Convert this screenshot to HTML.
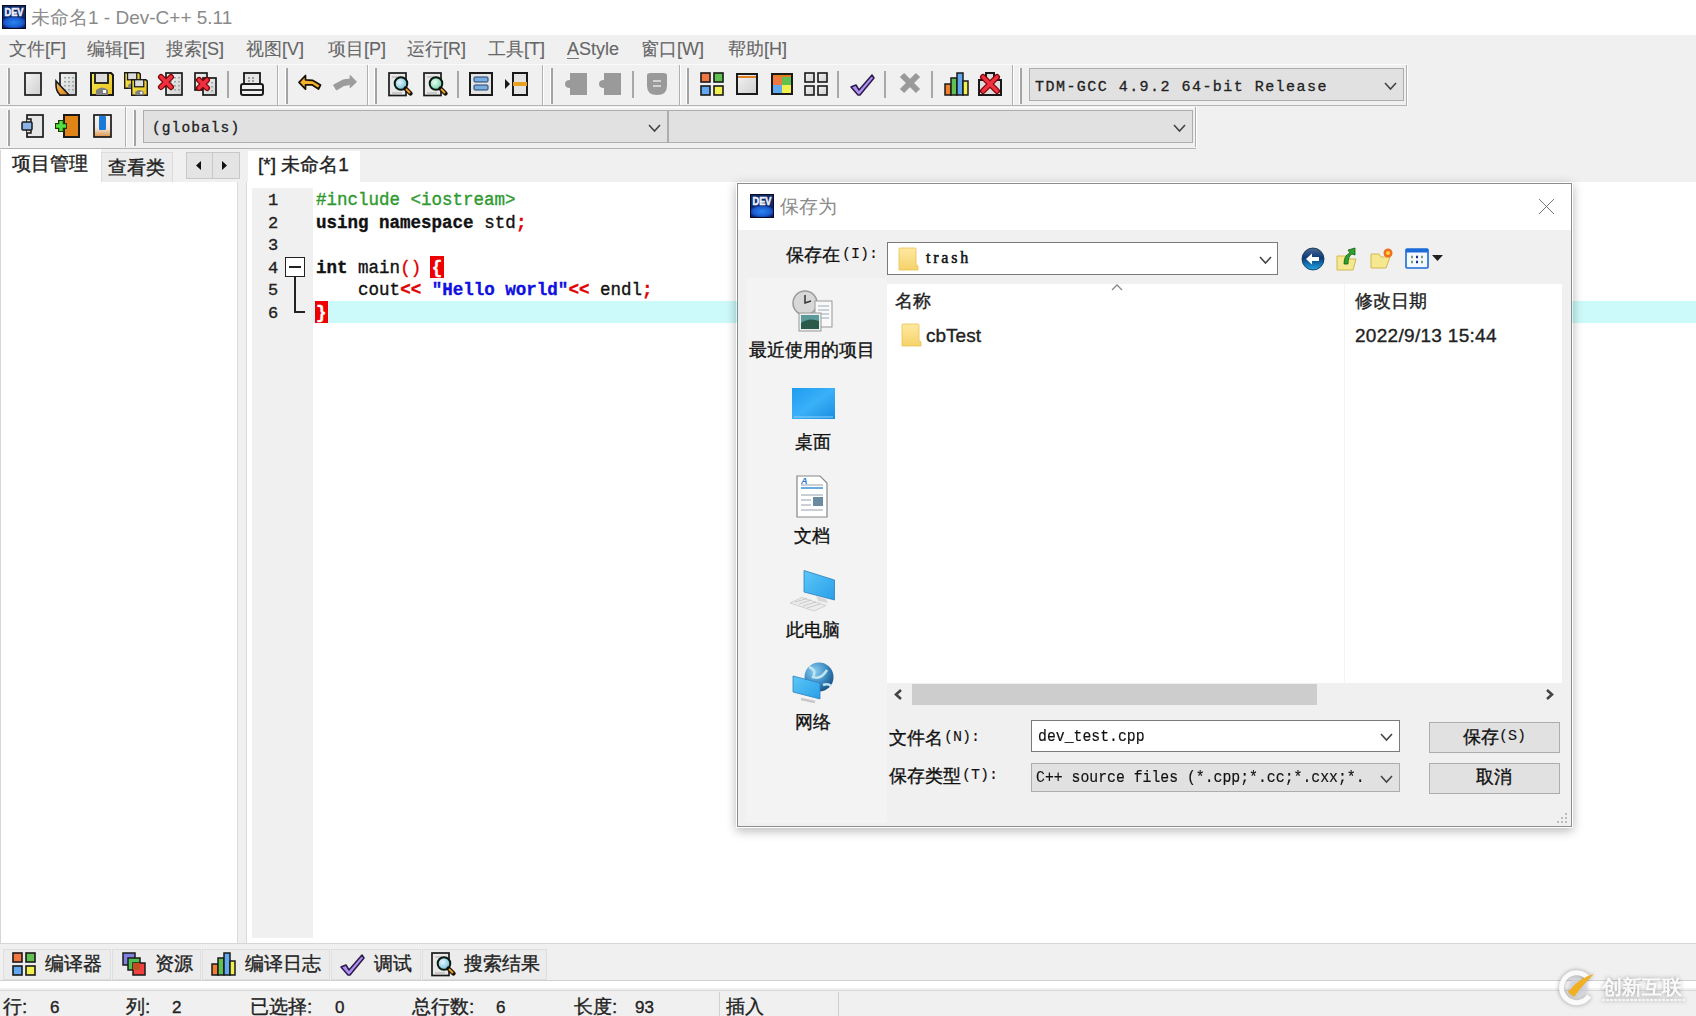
<!DOCTYPE html><html><head><meta charset="utf-8"><style>*{box-sizing:border-box;margin:0;padding:0}
html,body{width:1696px;height:1016px;overflow:hidden;background:#f0f0f0}
body{font-family:"Liberation Sans",sans-serif;position:relative}
.a{position:absolute}
.t{position:absolute;white-space:nowrap;line-height:1;-webkit-text-stroke-width:0.35px}
.mono{font-family:'Liberation Mono',monospace}
.serif{font-family:'Liberation Serif',serif}
svg{position:absolute;overflow:visible}
</style></head><body><svg width="0" height="0" style="position:absolute"><defs>
<linearGradient id="gpage" x1="0" y1="0" x2="1" y2="1"><stop offset="0" stop-color="#f4f4f4"/><stop offset="1" stop-color="#cfcfcf"/></linearGradient>
<linearGradient id="gyel" x1="0" y1="0" x2="1" y2="1"><stop offset="0" stop-color="#f8ec50"/><stop offset="1" stop-color="#e8c020"/></linearGradient>
<linearGradient id="gorg" x1="0" y1="0" x2="1" y2="1"><stop offset="0" stop-color="#f8c060"/><stop offset="1" stop-color="#e08010"/></linearGradient>
<radialGradient id="glens" cx=".4" cy=".4" r=".6"><stop offset="0" stop-color="#e8f8ff"/><stop offset="1" stop-color="#70c0d8"/></radialGradient>
<linearGradient id="gdesk" x1="0" y1="0" x2="1" y2="1"><stop offset="0" stop-color="#1e9cf0"/><stop offset=".5" stop-color="#3ab0f8"/><stop offset="1" stop-color="#1a8ee0"/></linearGradient>
<linearGradient id="gfold" x1="0" y1="0" x2="0" y2="1"><stop offset="0" stop-color="#ffe9a0"/><stop offset="1" stop-color="#f5d26a"/></linearGradient>
<linearGradient id="gmon" x1="0" y1="0" x2="1" y2="1"><stop offset="0" stop-color="#5cc8f8"/><stop offset="1" stop-color="#2a9ee8"/></linearGradient>
<linearGradient id="gp3" x1="0" y1="0" x2="0" y2="1"><stop offset="0" stop-color="#f4f4f4"/><stop offset=".6" stop-color="#f0e8e0"/><stop offset="1" stop-color="#e09040"/></linearGradient>
<radialGradient id="gdevb" cx=".5" cy=".5" r=".6"><stop offset="0" stop-color="#2a86f0"/><stop offset=".7" stop-color="#1a5ad0"/><stop offset="1" stop-color="#0a2070"/></radialGradient>
<radialGradient id="glens2" cx=".4" cy=".4" r=".6"><stop offset="0" stop-color="#e8fff0"/><stop offset="1" stop-color="#70d0b0"/></radialGradient>
<linearGradient id="gback" x1="0" y1="0" x2="0" y2="1"><stop offset="0" stop-color="#4a6a90"/><stop offset=".45" stop-color="#0a3a78"/><stop offset="1" stop-color="#20a8e8"/></linearGradient>
<radialGradient id="gglobe" cx=".35" cy=".3" r=".75"><stop offset="0" stop-color="#8ad0f0"/><stop offset=".6" stop-color="#3a88c0"/><stop offset="1" stop-color="#1a5080"/></radialGradient>
</defs></svg><div class="a" style="left:0px;top:0px;width:1696px;height:35px;background:#fff"></div>
<svg style="left:2px;top:5px" width="24" height="24" viewBox="0 0 24 24"><rect x="0.5" y="0.5" width="23" height="23" fill="#0d2a6a" stroke="#0a0a20"/><rect x="1" y="12" width="22" height="11" fill="url(#gdevb)"/><text x="12" y="11" font-family="Liberation Sans" font-weight="bold" font-size="10" fill="#f0f0ff" stroke="#f0f0ff" stroke-width=".5" text-anchor="middle" textLength="19" lengthAdjust="spacingAndGlyphs">DEV</text></svg>
<span class="t" style="left:31px;top:8px;font-size:19px;color:#8a8a8a;-webkit-text-stroke-width:0">未命名1 - Dev-C++ 5.11</span>
<span class="t" style="left:9px;top:40px;font-size:18px;color:#666;-webkit-text-stroke-width:0.1px">文件[F]</span>
<span class="t" style="left:87px;top:40px;font-size:18px;color:#666;-webkit-text-stroke-width:0.1px">编辑[E]</span>
<span class="t" style="left:166px;top:40px;font-size:18px;color:#666;-webkit-text-stroke-width:0.1px">搜索[S]</span>
<span class="t" style="left:246px;top:40px;font-size:18px;color:#666;-webkit-text-stroke-width:0.1px">视图[V]</span>
<span class="t" style="left:328px;top:40px;font-size:18px;color:#666;-webkit-text-stroke-width:0.1px">项目[P]</span>
<span class="t" style="left:407px;top:40px;font-size:18px;color:#666;-webkit-text-stroke-width:0.1px">运行[R]</span>
<span class="t" style="left:488px;top:40px;font-size:18px;color:#666;-webkit-text-stroke-width:0.1px">工具[T]</span>
<span class="t" style="left:567px;top:40px;font-size:18px;color:#666;-webkit-text-stroke-width:0.1px">AStyle</span>
<span class="t" style="left:641px;top:40px;font-size:18px;color:#666;-webkit-text-stroke-width:0.1px">窗口[W]</span>
<span class="t" style="left:728px;top:40px;font-size:18px;color:#666;-webkit-text-stroke-width:0.1px">帮助[H]</span>
<div class="a" style="left:567px;top:58px;width:12px;height:1px;background:#777"></div>
<div class="a" style="left:0px;top:64px;width:1407px;height:1px;background:#fbfbfb"></div>
<div class="a" style="left:0px;top:105px;width:1407px;height:1px;background:#b4b4b4"></div>
<div class="a" style="left:0px;top:107px;width:1196px;height:1px;background:#fff"></div>
<div class="a" style="left:0px;top:148px;width:1196px;height:1px;background:#b4b4b4"></div>
<div class="a" style="left:7px;top:68px;width:1px;height:36px;background:#fff"></div>
<div class="a" style="left:8px;top:68px;width:2px;height:36px;background:#a4a4a4"></div>
<div class="a" style="left:285px;top:68px;width:1px;height:36px;background:#fff"></div>
<div class="a" style="left:286px;top:68px;width:2px;height:36px;background:#a4a4a4"></div>
<div class="a" style="left:374px;top:68px;width:1px;height:36px;background:#fff"></div>
<div class="a" style="left:375px;top:68px;width:2px;height:36px;background:#a4a4a4"></div>
<div class="a" style="left:550px;top:68px;width:1px;height:36px;background:#fff"></div>
<div class="a" style="left:551px;top:68px;width:2px;height:36px;background:#a4a4a4"></div>
<div class="a" style="left:686px;top:68px;width:1px;height:36px;background:#fff"></div>
<div class="a" style="left:687px;top:68px;width:2px;height:36px;background:#a4a4a4"></div>
<div class="a" style="left:1019px;top:68px;width:1px;height:36px;background:#fff"></div>
<div class="a" style="left:1020px;top:68px;width:2px;height:36px;background:#a4a4a4"></div>
<div class="a" style="left:277px;top:65px;width:1px;height:40px;background:#b0b0b0"></div>
<div class="a" style="left:278px;top:65px;width:1px;height:40px;background:#fff"></div>
<div class="a" style="left:367px;top:65px;width:1px;height:40px;background:#b0b0b0"></div>
<div class="a" style="left:368px;top:65px;width:1px;height:40px;background:#fff"></div>
<div class="a" style="left:542px;top:65px;width:1px;height:40px;background:#b0b0b0"></div>
<div class="a" style="left:543px;top:65px;width:1px;height:40px;background:#fff"></div>
<div class="a" style="left:679px;top:65px;width:1px;height:40px;background:#b0b0b0"></div>
<div class="a" style="left:680px;top:65px;width:1px;height:40px;background:#fff"></div>
<div class="a" style="left:1012px;top:65px;width:1px;height:40px;background:#b0b0b0"></div>
<div class="a" style="left:1013px;top:65px;width:1px;height:40px;background:#fff"></div>
<div class="a" style="left:1406px;top:65px;width:1px;height:40px;background:#b0b0b0"></div>
<div class="a" style="left:1407px;top:65px;width:1px;height:40px;background:#fff"></div>
<div class="a" style="left:227px;top:71px;width:2px;height:27px;background:#a8a8a8"></div>
<div class="a" style="left:457px;top:71px;width:2px;height:27px;background:#a8a8a8"></div>
<div class="a" style="left:632px;top:71px;width:2px;height:27px;background:#a8a8a8"></div>
<div class="a" style="left:837px;top:71px;width:2px;height:27px;background:#a8a8a8"></div>
<div class="a" style="left:884px;top:71px;width:2px;height:27px;background:#a8a8a8"></div>
<div class="a" style="left:931px;top:71px;width:2px;height:27px;background:#a8a8a8"></div>
<svg style="left:24px;top:72px" width="24" height="24" viewBox="0 0 24 24"><rect x="1" y="1" width="16" height="22" fill="url(#gpage)" stroke="#1a1a1a" stroke-width="1.7"/></svg>
<svg style="left:55px;top:72px" width="24" height="24" viewBox="0 0 24 24"><rect x="5" y="1" width="16" height="22" fill="url(#gpage)" stroke="#1a1a1a" stroke-width="1.7"/><rect x="9" y="5" width="2" height="1.5" fill="#9aa"/><rect x="13" y="5" width="2" height="1.5" fill="#9aa"/><rect x="17" y="5" width="2" height="1.5" fill="#9aa"/><rect x="9" y="9" width="2" height="1.5" fill="#9aa"/><rect x="13" y="9" width="2" height="1.5" fill="#9aa"/><rect x="17" y="9" width="2" height="1.5" fill="#9aa"/><rect x="9" y="13" width="2" height="1.5" fill="#9aa"/><rect x="13" y="13" width="2" height="1.5" fill="#9aa"/><rect x="17" y="13" width="2" height="1.5" fill="#9aa"/><rect x="9" y="17" width="2" height="1.5" fill="#9aa"/><rect x="13" y="17" width="2" height="1.5" fill="#9aa"/><rect x="17" y="17" width="2" height="1.5" fill="#9aa"/><path d="M1 9 L14 23 L5 23 Q1 19 1 13Z" fill="url(#gorg)" stroke="#1a1a1a" stroke-width="1.6"/></svg>
<svg style="left:90px;top:72px" width="24" height="24" viewBox="0 0 24 24"><g transform="translate(0,0) scale(1.0)"><path d="M1 1 H21 L23 3 V23 H1Z" fill="url(#gyel)" stroke="#1a1a1a" stroke-width="2"/><rect x="5" y="1" width="13" height="10" fill="#dcdcdc" stroke="#1a1a1a" stroke-width="1.8"/><path d="M6 23 V18 Q12 13 18 18 V23Z" fill="#808080"/><rect x="13" y="18" width="3" height="3" fill="#fff"/></g></svg>
<svg style="left:124px;top:72px" width="24" height="24" viewBox="0 0 24 24"><g transform="translate(0,0) scale(0.7083333333333334)"><path d="M1 1 H21 L23 3 V23 H1Z" fill="url(#gyel)" stroke="#1a1a1a" stroke-width="2"/><rect x="5" y="1" width="13" height="10" fill="#dcdcdc" stroke="#1a1a1a" stroke-width="1.8"/><path d="M6 23 V18 Q12 13 18 18 V23Z" fill="#808080"/><rect x="13" y="18" width="3" height="3" fill="#fff"/></g><g transform="translate(7,7) scale(0.7083333333333334)"><path d="M1 1 H21 L23 3 V23 H1Z" fill="url(#gyel)" stroke="#1a1a1a" stroke-width="2"/><rect x="5" y="1" width="13" height="10" fill="#dcdcdc" stroke="#1a1a1a" stroke-width="1.8"/><path d="M6 23 V18 Q12 13 18 18 V23Z" fill="#808080"/><rect x="13" y="18" width="3" height="3" fill="#fff"/></g></svg>
<svg style="left:159px;top:72px" width="24" height="24" viewBox="0 0 24 24"><rect x="7" y="1" width="16" height="22" fill="url(#gpage)" stroke="#1a1a1a" stroke-width="1.7"/><rect x="11" y="5" width="2" height="1.5" fill="#9aa"/><rect x="15" y="5" width="2" height="1.5" fill="#9aa"/><rect x="19" y="5" width="2" height="1.5" fill="#9aa"/><rect x="11" y="9" width="2" height="1.5" fill="#9aa"/><rect x="15" y="9" width="2" height="1.5" fill="#9aa"/><rect x="19" y="9" width="2" height="1.5" fill="#9aa"/><rect x="11" y="13" width="2" height="1.5" fill="#9aa"/><rect x="15" y="13" width="2" height="1.5" fill="#9aa"/><rect x="19" y="13" width="2" height="1.5" fill="#9aa"/><rect x="11" y="17" width="2" height="1.5" fill="#9aa"/><rect x="15" y="17" width="2" height="1.5" fill="#9aa"/><rect x="19" y="17" width="2" height="1.5" fill="#9aa"/><path d="M2 5 L12 15 M12 5 L2 15" stroke="#7a0000" stroke-width="6" stroke-linecap="round"/><path d="M2 5 L12 15 M12 5 L2 15" stroke="#f03040" stroke-width="3.6" stroke-linecap="round"/></svg>
<svg style="left:193px;top:72px" width="24" height="24" viewBox="0 0 24 24"><rect x="2" y="1" width="12" height="17" fill="url(#gpage)" stroke="#1a1a1a" stroke-width="1.7"/><rect x="6" y="5" width="2" height="1.5" fill="#9aa"/><rect x="10" y="5" width="2" height="1.5" fill="#9aa"/><rect x="6" y="9" width="2" height="1.5" fill="#9aa"/><rect x="10" y="9" width="2" height="1.5" fill="#9aa"/><rect x="6" y="13" width="2" height="1.5" fill="#9aa"/><rect x="10" y="13" width="2" height="1.5" fill="#9aa"/><rect x="10" y="6" width="13" height="17" fill="url(#gpage)" stroke="#1a1a1a" stroke-width="1.7"/><rect x="14" y="10" width="2" height="1.5" fill="#9aa"/><rect x="18" y="10" width="2" height="1.5" fill="#9aa"/><rect x="14" y="14" width="2" height="1.5" fill="#9aa"/><rect x="18" y="14" width="2" height="1.5" fill="#9aa"/><rect x="14" y="18" width="2" height="1.5" fill="#9aa"/><rect x="18" y="18" width="2" height="1.5" fill="#9aa"/><path d="M6 8 L14 16 M14 8 L6 16" stroke="#7a0000" stroke-width="6" stroke-linecap="round"/><path d="M6 8 L14 16 M14 8 L6 16" stroke="#f03040" stroke-width="3.6" stroke-linecap="round"/></svg>
<svg style="left:240px;top:72px" width="24" height="24" viewBox="0 0 24 24"><rect x="4" y="1" width="16" height="12" fill="#e6e6e6" stroke="#1a1a1a" stroke-width="1.8"/><rect x="1" y="12" width="22" height="11" rx="2" fill="#f0f0f0" stroke="#1a1a1a" stroke-width="2"/><path d="M2 18 H22" stroke="#1a1a1a" stroke-width="1.8"/><path d="M8 6h2M12 6h2M8 9h2M12 9h2" stroke="#888" stroke-width="1.4"/></svg>
<svg style="left:299px;top:72px" width="24" height="24" viewBox="0 0 24 24"><path d="M0 10.3 L6.5 3.5 L6.5 7.8 L13.5 8.3 L21.5 13 L19.5 17 L13 12.8 L6.5 12.8 L6.5 17.2Z" fill="#f4b030" stroke="#1a1000" stroke-width="1.7" stroke-linejoin="round"/></svg>
<svg style="left:333px;top:72px" width="24" height="24" viewBox="0 0 24 24"><path d="M23.5 9.9 L17.2 3.4 L17.2 7 L10 8 L0.5 13 L3.5 18 L11 13.5 L17.2 12.5 L17.2 15.8Z" fill="#9c9c9c" stroke="#9c9c9c" stroke-width="1" stroke-linejoin="round"/></svg>
<svg style="left:388px;top:72px" width="24" height="24" viewBox="0 0 24 24"><rect x="1" y="1" width="17" height="22.5" fill="#e8e8e8" stroke="#1a1a1a" stroke-width="1.7"/><path d="M4 5h10M4 21h10" stroke="#aaa" stroke-width="1"/><circle cx="13" cy="11.5" r="6.3" fill="url(#glens)" stroke="#0a1a10" stroke-width="2"/><path d="M17.5 16.5 L22.5 21.5" stroke="#1a1000" stroke-width="4.4" stroke-linecap="round"/><path d="M18 17 L22 21" stroke="#e8a030" stroke-width="2"/></svg>
<svg style="left:423px;top:72px" width="24" height="24" viewBox="0 0 24 24"><rect x="1" y="1" width="17" height="22.5" fill="#e8e8e8" stroke="#1a1a1a" stroke-width="1.7"/><path d="M4 5h10M4 21h10" stroke="#aaa" stroke-width="1"/><circle cx="13" cy="11.5" r="6.3" fill="url(#glens2)" stroke="#0a1a10" stroke-width="2"/><path d="M17.5 16.5 L22.5 21.5" stroke="#1a1000" stroke-width="4.4" stroke-linecap="round"/><path d="M18 17 L22 21" stroke="#e8a030" stroke-width="2"/></svg>
<svg style="left:469px;top:72px" width="24" height="24" viewBox="0 0 24 24"><rect x="1" y="1" width="22" height="22" fill="#e4e4e4" stroke="#1a1a1a" stroke-width="2"/><rect x="5" y="5" width="14" height="5" rx="1" fill="#7aaee0" stroke="#20406a" stroke-width="1"/><rect x="5" y="13" width="14" height="5" rx="1" fill="#7aaee0" stroke="#20406a" stroke-width="1"/></svg>
<svg style="left:504px;top:72px" width="24" height="24" viewBox="0 0 24 24"><rect x="9" y="1" width="14" height="22" fill="#e4e4e4" stroke="#1a1a1a" stroke-width="2"/><rect x="9" y="10" width="14" height="4" fill="#e8a020"/><path d="M1 7 L6 12 L1 17Z" fill="#1a1a1a"/></svg>
<svg style="left:564px;top:72px" width="24" height="24" viewBox="0 0 24 24"><path d="M6 1 H23 V23 H6 V16 Q1 16 1 12 Q1 8 6 8Z" fill="#9a9a9a"/></svg>
<svg style="left:598px;top:72px" width="24" height="24" viewBox="0 0 24 24"><path d="M6 1 H23 V23 H6 V16 Q1 16 1 12 Q1 8 6 8Z" fill="#9a9a9a"/></svg>
<svg style="left:645px;top:72px" width="24" height="24" viewBox="0 0 24 24"><path d="M2 3 Q2 1 6 1 H18 Q22 1 22 3 V14 Q22 23 12 23 Q2 23 2 14Z" fill="#9a9a9a"/><path d="M8 9h8M8 14h8" stroke="#e8e8e8" stroke-width="1.6"/></svg>
<svg style="left:700px;top:72px" width="24" height="24" viewBox="0 0 24 24"><rect x="1" y="1" width="9" height="9" fill="#f07840" stroke="#1a1a1a" stroke-width="1.6"/><rect x="14" y="1" width="9" height="9" fill="#60c050" stroke="#1a1a1a" stroke-width="1.6"/><rect x="1" y="14" width="9" height="9" fill="#60a8f0" stroke="#1a1a1a" stroke-width="1.6"/><rect x="14" y="14" width="9" height="9" fill="#f0f050" stroke="#1a1a1a" stroke-width="1.6"/></svg>
<svg style="left:736px;top:72px" width="24" height="24" viewBox="0 0 24 24"><rect x="1" y="2" width="20" height="20" fill="url(#gpage)" stroke="#1a1a1a" stroke-width="2"/><path d="M2 5 H20" stroke="#e08020" stroke-width="2"/></svg>
<svg style="left:771px;top:72px" width="24" height="24" viewBox="0 0 24 24"><rect x="1" y="2" width="20" height="20" fill="#ddd" stroke="#1a1a1a" stroke-width="2"/><rect x="2" y="5" width="9" height="8" fill="#f07840"/><rect x="11" y="5" width="9" height="8" fill="#60c050"/><rect x="2" y="13" width="9" height="8" fill="#60a8f0"/><rect x="11" y="13" width="9" height="8" fill="#f0f050"/><path d="M2 4 H20" stroke="#e08020" stroke-width="2"/></svg>
<svg style="left:804px;top:72px" width="24" height="24" viewBox="0 0 24 24"><rect x="1" y="1" width="9" height="9" fill="url(#gpage)" stroke="#1a1a1a" stroke-width="1.6"/><rect x="14" y="1" width="9" height="9" fill="url(#gpage)" stroke="#1a1a1a" stroke-width="1.6"/><rect x="1" y="14" width="9" height="9" fill="url(#gpage)" stroke="#1a1a1a" stroke-width="1.6"/><rect x="14" y="14" width="9" height="9" fill="url(#gpage)" stroke="#1a1a1a" stroke-width="1.6"/></svg>
<svg style="left:850px;top:72px" width="24" height="24" viewBox="0 0 24 24"><path d="M1 15 L6 13 L9 18 L22 3 L24 6 L10 23 L8 23Z" fill="#b090f0" stroke="#2a1a4a" stroke-width="1.5" stroke-linejoin="round"/></svg>
<svg style="left:899px;top:72px" width="24" height="24" viewBox="0 0 24 24"><path d="M3 3 L19 19 M19 3 L3 19" stroke="#9a9a9a" stroke-width="6"/></svg>
<svg style="left:944px;top:72px" width="24" height="24" viewBox="0 0 24 24"><rect x="1" y="12" width="6" height="11" fill="#f08030" stroke="#1a1a1a" stroke-width="1.5"/><rect x="7" y="6" width="6" height="17" fill="#60c050" stroke="#1a1a1a" stroke-width="1.5"/><rect x="13" y="1" width="6" height="22" fill="#60a8f0" stroke="#1a1a1a" stroke-width="1.5"/><rect x="19" y="9" width="5" height="14" fill="#f0f050" stroke="#1a1a1a" stroke-width="1.5"/></svg>
<svg style="left:978px;top:72px" width="24" height="24" viewBox="0 0 24 24"><path d="M1 8 H8 V1 H16 V8 H23 V23 H1Z" fill="#ddd" stroke="#1a1a1a" stroke-width="2"/><path d="M5 5 L19 19 M19 5 L5 19" stroke="#7a0000" stroke-width="6" stroke-linecap="round"/><path d="M5 5 L19 19 M19 5 L5 19" stroke="#f03040" stroke-width="3.6" stroke-linecap="round"/></svg>
<div class="a" style="left:1029px;top:68px;width:375px;height:33px;background:#e1e1e1;border:1px solid #adadad"></div>
<span class="t" style="left:1035px;top:80px;font-size:15px;color:#222;-webkit-text-stroke-width:0.3px;font-family:'Liberation Mono',monospace;letter-spacing:1.46px">TDM-GCC 4.9.2 64-bit Release</span>
<svg style="left:1384px;top:82px" width="13" height="8" viewBox="0 0 13 8"><path d="M1 1 L6.5 7 L12 1" fill="none" stroke="#444" stroke-width="1.6"/></svg>
<div class="a" style="left:7px;top:110px;width:1px;height:36px;background:#fff"></div>
<div class="a" style="left:8px;top:110px;width:2px;height:36px;background:#a4a4a4"></div>
<div class="a" style="left:125px;top:107px;width:1px;height:40px;background:#b0b0b0"></div>
<div class="a" style="left:126px;top:107px;width:1px;height:40px;background:#fff"></div>
<div class="a" style="left:133px;top:110px;width:1px;height:36px;background:#fff"></div>
<div class="a" style="left:134px;top:110px;width:2px;height:36px;background:#a4a4a4"></div>
<div class="a" style="left:1195px;top:107px;width:1px;height:40px;background:#b0b0b0"></div>
<div class="a" style="left:1196px;top:107px;width:1px;height:40px;background:#fff"></div>
<svg style="left:21px;top:114px" width="24" height="24" viewBox="0 0 24 24"><rect x="6" y="1" width="16" height="22" fill="#e6e6e6" stroke="#1a1a1a" stroke-width="1.7"/><path d="M6 5 H10 V19 H6" fill="#ddd" stroke="#1a1a1a" stroke-width="1.5"/><rect x="1" y="8" width="10" height="8" rx="1" fill="#8ab4e8" stroke="#1a1a1a" stroke-width="1.5"/></svg>
<svg style="left:56px;top:114px" width="24" height="24" viewBox="0 0 24 24"><rect x="8" y="1" width="15" height="22" fill="#e08418" stroke="#1a1a1a" stroke-width="2"/><path d="M5 6 V18 M-1 12 H11" stroke="#1a3a00" stroke-width="6"/><path d="M5 7 V17 M0 12 H10" stroke="#50e040" stroke-width="3.4"/></svg>
<svg style="left:93px;top:114px" width="24" height="24" viewBox="0 0 24 24"><rect x="1" y="1" width="17" height="22" fill="url(#gp3)" stroke="#1a1a1a" stroke-width="1.7"/><rect x="6" y="2" width="7" height="14" rx="1" fill="#1a7ad8"/></svg>
<div class="a" style="left:143px;top:110px;width:1050px;height:33px;background:#e1e1e1;border:1px solid #adadad"></div>
<div class="a" style="left:667px;top:111px;width:2px;height:31px;background:#adadad"></div>
<span class="t" style="left:152px;top:121px;font-size:14.5px;color:#222;-webkit-text-stroke-width:0.3px;font-family:'Liberation Mono',monospace;letter-spacing:1.1px">(globals)</span>
<svg style="left:648px;top:124px" width="13" height="8" viewBox="0 0 13 8"><path d="M1 1 L6.5 7 L12 1" fill="none" stroke="#444" stroke-width="1.6"/></svg>
<svg style="left:1173px;top:124px" width="13" height="8" viewBox="0 0 13 8"><path d="M1 1 L6.5 7 L12 1" fill="none" stroke="#444" stroke-width="1.6"/></svg>
<div class="a" style="left:0px;top:149px;width:1696px;height:33px;background:#f0f0f0"></div>
<div class="a" style="left:0px;top:149px;width:101px;height:33px;background:#fff"></div>
<span class="t" style="left:12px;top:154px;font-size:19px;color:#222">项目管理</span>
<div class="a" style="left:101px;top:152px;width:72px;height:30px;background:#ececec;border:1px solid #dcdcdc;border-bottom:none"></div>
<span class="t" style="left:108px;top:158px;font-size:19px;color:#222">查看类</span>
<div class="a" style="left:186px;top:152px;width:54px;height:27px;background:#e4e4e4;border:1px solid #c8c8c8"></div>
<div class="a" style="left:212px;top:153px;width:1px;height:25px;background:#c8c8c8"></div>
<svg style="left:196px;top:161px" width="6" height="9" viewBox="0 0 6 9"><path d="M5 0 L0 4.5 L5 9Z" fill="#111"/></svg>
<svg style="left:222px;top:161px" width="6" height="9" viewBox="0 0 6 9"><path d="M0 0 L5 4.5 L0 9Z" fill="#111"/></svg>
<div class="a" style="left:248px;top:151px;width:112px;height:31px;background:#fff"></div>
<span class="t" style="left:258px;top:155px;font-size:19px;color:#222">[*] 未命名1</span>
<div class="a" style="left:0px;top:150px;width:1px;height:793px;background:#d6d6d6"></div>
<div class="a" style="left:0px;top:182px;width:238px;height:761px;background:#fff;border-left:1px solid #d6d6d6;border-right:1px solid #dadada"></div>
<div class="a" style="left:246px;top:182px;width:1450px;height:761px;background:#fff;border-left:1px solid #dadada"></div>
<div class="a" style="left:252px;top:188px;width:61px;height:750px;background:#f0f0f0"></div>
<span class="t" style="left:268px;top:192.0px;font-size:17px;color:#222;font-family:'Liberation Mono',monospace;">1</span>
<span class="t" style="left:268px;top:214.5px;font-size:17px;color:#222;font-family:'Liberation Mono',monospace;">2</span>
<span class="t" style="left:268px;top:237.0px;font-size:17px;color:#222;font-family:'Liberation Mono',monospace;">3</span>
<span class="t" style="left:268px;top:259.5px;font-size:17px;color:#222;font-family:'Liberation Mono',monospace;">4</span>
<span class="t" style="left:268px;top:282.0px;font-size:17px;color:#222;font-family:'Liberation Mono',monospace;">5</span>
<span class="t" style="left:268px;top:304.5px;font-size:17px;color:#222;font-family:'Liberation Mono',monospace;">6</span>
<div class="a" style="left:313px;top:301px;width:1383px;height:22px;background:#ccf9f9"></div>
<div class="a" style="left:315px;top:301px;width:13px;height:22px;background:#ee0000"></div>
<div class="a" style="left:430px;top:256px;width:14px;height:22px;background:#ee0000"></div>
<div class="a" style="left:285px;top:257px;width:20px;height:20px;border:1.5px solid #222;background:#fff"></div>
<div class="a" style="left:289px;top:266px;width:12px;height:1.5px;background:#222"></div>
<div class="a" style="left:294px;top:277px;width:1.5px;height:36px;background:#222"></div>
<div class="a" style="left:294px;top:311px;width:11px;height:1.5px;background:#222"></div>
<span class="t" style="left:316.0px;top:192.0px;font-size:17.5px;font-family:'Liberation Mono',monospace;color:#2e9a2e;">#include &lt;iostream&gt;</span>
<span class="t" style="left:316.0px;top:214.5px;font-size:17.5px;font-family:'Liberation Mono',monospace;color:#111;font-weight:bold;">using namespace</span>
<span class="t" style="left:484.32px;top:214.5px;font-size:17.5px;font-family:'Liberation Mono',monospace;color:#111;">std</span>
<span class="t" style="left:515.88px;top:214.5px;font-size:17.5px;font-family:'Liberation Mono',monospace;color:#e00000;font-weight:bold;">;</span>
<span class="t" style="left:316.0px;top:259.5px;font-size:17.5px;font-family:'Liberation Mono',monospace;color:#111;font-weight:bold;">int</span>
<span class="t" style="left:358.08px;top:259.5px;font-size:17.5px;font-family:'Liberation Mono',monospace;color:#111;">main</span>
<span class="t" style="left:400.15999999999997px;top:259.5px;font-size:17.5px;font-family:'Liberation Mono',monospace;color:#e00000;">()</span>
<span class="t" style="left:431.72px;top:259.5px;font-size:17.5px;font-family:'Liberation Mono',monospace;color:#fff;font-weight:bold;">{</span>
<span class="t" style="left:358.08px;top:282.0px;font-size:17.5px;font-family:'Liberation Mono',monospace;color:#111;">cout</span>
<span class="t" style="left:400.15999999999997px;top:282.0px;font-size:17.5px;font-family:'Liberation Mono',monospace;color:#e00000;font-weight:bold;">&lt;&lt;</span>
<span class="t" style="left:431.72px;top:282.0px;font-size:17.5px;font-family:'Liberation Mono',monospace;color:#1010e0;font-weight:bold;">"Hello world"</span>
<span class="t" style="left:568.48px;top:282.0px;font-size:17.5px;font-family:'Liberation Mono',monospace;color:#e00000;font-weight:bold;">&lt;&lt;</span>
<span class="t" style="left:600.04px;top:282.0px;font-size:17.5px;font-family:'Liberation Mono',monospace;color:#111;">endl</span>
<span class="t" style="left:642.12px;top:282.0px;font-size:17.5px;font-family:'Liberation Mono',monospace;color:#e00000;font-weight:bold;">;</span>
<span class="t" style="left:316.0px;top:304.5px;font-size:17.5px;font-family:'Liberation Mono',monospace;color:#fff;font-weight:bold;">}</span>
<div class="a" style="left:0px;top:943px;width:1696px;height:38px;background:#f0f0f0"></div>
<div class="a" style="left:0px;top:943px;width:1696px;height:1px;background:#d6d6d6"></div>
<div class="a" style="left:3px;top:949px;width:108px;height:31px;background:#ececec;border:1px solid #dedede"></div>
<svg style="left:12px;top:952px" width="24" height="24" viewBox="0 0 24 24"><rect x="1" y="1" width="9" height="9" fill="#f07840" stroke="#1a1a1a" stroke-width="1.6"/><rect x="14" y="1" width="9" height="9" fill="#60c050" stroke="#1a1a1a" stroke-width="1.6"/><rect x="1" y="14" width="9" height="9" fill="#60a8f0" stroke="#1a1a1a" stroke-width="1.6"/><rect x="14" y="14" width="9" height="9" fill="#f0f050" stroke="#1a1a1a" stroke-width="1.6"/></svg>
<span class="t" style="left:45px;top:954px;font-size:19px;color:#222">编译器</span>
<div class="a" style="left:112px;top:949px;width:89px;height:31px;background:#ececec;border:1px solid #dedede"></div>
<svg style="left:122px;top:952px" width="24" height="24" viewBox="0 0 24 24"><rect x="1" y="1" width="12" height="12" fill="#8080e0" stroke="#1a1a1a" stroke-width="1.5"/><rect x="6" y="6" width="12" height="12" fill="#50c050" stroke="#1a1a1a" stroke-width="1.5"/><rect x="11" y="11" width="12" height="12" fill="#f04040" stroke="#1a1a1a" stroke-width="1.5"/><rect x="11" y="11" width="7" height="7" fill="#c05020"/></svg>
<span class="t" style="left:155px;top:954px;font-size:19px;color:#222">资源</span>
<div class="a" style="left:202px;top:949px;width:128px;height:31px;background:#ececec;border:1px solid #dedede"></div>
<svg style="left:211px;top:952px" width="24" height="24" viewBox="0 0 24 24"><rect x="1" y="12" width="6" height="11" fill="#f08030" stroke="#1a1a1a" stroke-width="1.5"/><rect x="7" y="6" width="6" height="17" fill="#60c050" stroke="#1a1a1a" stroke-width="1.5"/><rect x="13" y="1" width="6" height="22" fill="#60a8f0" stroke="#1a1a1a" stroke-width="1.5"/><rect x="19" y="9" width="5" height="14" fill="#f0f050" stroke="#1a1a1a" stroke-width="1.5"/></svg>
<span class="t" style="left:245px;top:954px;font-size:19px;color:#222">编译日志</span>
<div class="a" style="left:331px;top:949px;width:90px;height:31px;background:#ececec;border:1px solid #dedede"></div>
<svg style="left:340px;top:952px" width="24" height="24" viewBox="0 0 24 24"><path d="M1 15 L6 13 L9 18 L22 3 L24 6 L10 23 L8 23Z" fill="#b090f0" stroke="#2a1a4a" stroke-width="1.5" stroke-linejoin="round"/></svg>
<span class="t" style="left:374px;top:954px;font-size:19px;color:#222">调试</span>
<div class="a" style="left:422px;top:949px;width:125px;height:31px;background:#ececec;border:1px solid #dedede"></div>
<svg style="left:431px;top:952px" width="24" height="24" viewBox="0 0 24 24"><rect x="1" y="1" width="17" height="22.5" fill="#e8e8e8" stroke="#1a1a1a" stroke-width="1.7"/><path d="M4 5h10M4 21h10" stroke="#aaa" stroke-width="1"/><circle cx="13" cy="11.5" r="6.3" fill="url(#glens)" stroke="#0a1a10" stroke-width="2"/><path d="M17.5 16.5 L22.5 21.5" stroke="#1a1000" stroke-width="4.4" stroke-linecap="round"/><path d="M18 17 L22 21" stroke="#e8a030" stroke-width="2"/></svg>
<span class="t" style="left:464px;top:954px;font-size:19px;color:#222">搜索结果</span>
<div class="a" style="left:0px;top:980px;width:1696px;height:1px;background:#d0d0d0"></div>
<div class="a" style="left:0px;top:981px;width:1696px;height:7px;background:#fff"></div>
<div class="a" style="left:0px;top:988px;width:1696px;height:28px;background:#f0f0f0"></div>
<div class="a" style="left:0px;top:990px;width:1696px;height:1px;background:#d8d8d8"></div>
<span class="t" style="left:3px;top:997px;font-size:19px;color:#222">行:</span>
<span class="t" style="left:50px;top:999px;font-size:17px;color:#222">6</span>
<span class="t" style="left:126px;top:997px;font-size:19px;color:#222">列:</span>
<span class="t" style="left:172px;top:999px;font-size:17px;color:#222">2</span>
<span class="t" style="left:250px;top:997px;font-size:19px;color:#222">已选择:</span>
<span class="t" style="left:335px;top:999px;font-size:17px;color:#222">0</span>
<span class="t" style="left:412px;top:997px;font-size:19px;color:#222">总行数:</span>
<span class="t" style="left:496px;top:999px;font-size:17px;color:#222">6</span>
<span class="t" style="left:574px;top:997px;font-size:19px;color:#222">长度:</span>
<span class="t" style="left:635px;top:999px;font-size:17px;color:#222">93</span>
<span class="t" style="left:726px;top:997px;font-size:19px;color:#222">插入</span>
<div class="a" style="left:719px;top:992px;width:1px;height:24px;background:#d0d0d0"></div>
<div class="a" style="left:838px;top:992px;width:1px;height:24px;background:#d0d0d0"></div>
<div class="a" style="left:736px;top:182px;width:837px;height:646px;box-shadow:0 3px 10px rgba(0,0,0,.28)"></div>
<div class="a" style="left:737px;top:183px;width:835px;height:644px;background:#f0f0f0;border:1px solid #8c8c8c"></div>
<div class="a" style="left:738px;top:184px;width:833px;height:46px;background:#fff"></div>
<svg style="left:750px;top:194px" width="24" height="24" viewBox="0 0 24 24"><rect x="0.5" y="0.5" width="23" height="23" fill="#0d2a6a" stroke="#0a0a20"/><rect x="1" y="12" width="22" height="11" fill="url(#gdevb)"/><text x="12" y="11" font-family="Liberation Sans" font-weight="bold" font-size="10" fill="#f0f0ff" stroke="#f0f0ff" stroke-width=".5" text-anchor="middle" textLength="19" lengthAdjust="spacingAndGlyphs">DEV</text></svg>
<span class="t" style="left:780px;top:197px;font-size:19px;color:#8a8a8a;-webkit-text-stroke-width:0">保存为</span>
<svg style="left:1539px;top:199px" width="15" height="15" viewBox="0 0 15 15"><path d="M0 0 L15 15 M15 0 L0 15" stroke="#777" stroke-width="1"/></svg>
<span class="t" style="left:786px;top:246px;font-size:18px;color:#111">保存在</span>
<span class="t" style="left:842px;top:247px;font-size:15px;color:#111;-webkit-text-stroke-width:0.1px;font-family:'Liberation Mono',monospace;">(I):</span>
<div class="a" style="left:887px;top:242px;width:391px;height:33px;background:#fff;border:1px solid #7a7a7a"></div>
<svg style="left:898px;top:247px" width="20" height="24" viewBox="0 0 20 24"><path d="M1 2 Q1 1 2 1 H17 Q18 1 18 2 V17 L20 19 V23 H1Z" fill="url(#gfold)" stroke="#e8c050" stroke-width="0.8"/></svg>
<span class="t" style="left:926px;top:250px;font-size:16px;color:#111;font-family:'Liberation Serif',serif;-webkit-text-stroke-width:0.5px;letter-spacing:2.8px">trash</span>
<svg style="left:1259px;top:256px" width="13" height="8" viewBox="0 0 13 8"><path d="M1 1 L6.5 7 L12 1" fill="none" stroke="#444" stroke-width="1.6"/></svg>
<svg style="left:1301px;top:247px" width="24" height="24" viewBox="0 0 24 24"><circle cx="12" cy="12" r="11" fill="url(#gback)" stroke="#0a2a50" stroke-width="0.8"/><path d="M5 12 L11 6.5 V10 H18 V14 H11 V17.5Z" fill="#fff"/></svg>
<svg style="left:1336px;top:246px" width="22" height="25" viewBox="0 0 22 25"><path d="M1 10 H10 L12 13 H20 L17 24 H1Z" fill="#f6e890" stroke="#d0b850" stroke-width="1"/><path d="M8 18 Q8 9 14 7 L12 4 L19 2 L19 9 L16 8 Q12 10 12 18Z" fill="#30a030" stroke="#106010" stroke-width="0.8"/></svg>
<svg style="left:1370px;top:247px" width="24" height="22" viewBox="0 0 24 22"><path d="M1 7 H9 L11 10 H20 L16 21 H1Z" fill="#f6e890" stroke="#d0b850" stroke-width="1"/><circle cx="18" cy="6" r="4.5" fill="#f07020"/><circle cx="18" cy="6" r="2" fill="#ffd040"/></svg>
<svg style="left:1405px;top:248px" width="24" height="21" viewBox="0 0 24 21"><rect x="1" y="1" width="22" height="19" rx="1" fill="#f4f8ff" stroke="#1a6ad8" stroke-width="1.6"/><rect x="1" y="1" width="22" height="3.5" fill="#1a6ad8"/><path d="M6 9h2M16 9h2M6 14h2M16 14h2" stroke="#70a070" stroke-width="2.4"/><path d="M11 9h2M11 14h2" stroke="#203090" stroke-width="2.4"/></svg>
<svg style="left:1432px;top:255px" width="11" height="6" viewBox="0 0 11 6"><path d="M0 0 H11 L5.5 6Z" fill="#222"/></svg>
<div class="a" style="left:746px;top:278px;width:141px;height:545px;background:#f3f3f3"></div>
<svg style="left:791px;top:289px" width="44" height="44" viewBox="0 0 44 44"><circle cx="14" cy="14" r="12" fill="#d8d8d8" stroke="#999" stroke-width="1.5"/><path d="M14 6 V14 L20 12" stroke="#333" stroke-width="1.5" fill="none"/><rect x="24" y="12" width="17" height="26" fill="#f8f8f8" stroke="#999"/><path d="M27 17h11M27 21h11M27 25h11M27 29h11" stroke="#9ab"/><rect x="8" y="24" width="22" height="18" fill="#eee" stroke="#999"/><rect x="10" y="26" width="18" height="14" fill="#5a9a9a"/><path d="M10 34 Q18 28 28 32 V40 H10Z" fill="#2a5a4a"/></svg>
<span class="t" style="left:749px;top:341px;font-size:18px;color:#111">最近使用的项目</span>
<svg style="left:792px;top:388px" width="43" height="31" viewBox="0 0 43 31"><rect x="0" y="0" width="43" height="31" fill="url(#gdesk)"/><path d="M2 29 H41" stroke="#8fd0ff" stroke-width="1"/></svg>
<span class="t" style="left:795px;top:433px;font-size:18px;color:#111">桌面</span>
<svg style="left:796px;top:475px" width="32" height="43" viewBox="0 0 32 43"><path d="M1 1 H24 L31 8 V42 H1Z" fill="#fff" stroke="#888" stroke-width="1.2"/><path d="M5 10 H27 M5 20 H27 M5 25 H15 M5 30 H15 M5 35 H27" stroke="#b8c0c8" stroke-width="1.5"/><path d="M5 13 H27" stroke="#3a90d8" stroke-width="1.5"/><text x="5" y="9" font-size="9" font-weight="bold" font-style="italic" fill="#2a7ad0" font-family="Liberation Sans">A</text><rect x="17" y="22" width="10" height="9" fill="#6a8aa0"/></svg>
<span class="t" style="left:794px;top:527px;font-size:18px;color:#111">文档</span>
<svg style="left:790px;top:570px" width="46" height="42" viewBox="0 0 46 42"><path d="M14 0.5 L44.5 10 V30 L14 22Z" fill="url(#gmon)" stroke="#2a80c0" stroke-width="0.8"/><path d="M26 26 L36 29 L38 33 L28 31Z" fill="#d8d8d8"/><path d="M0 33 L12 27.5 L36 35.5 L24 41Z" fill="#ececec" stroke="#c8c8c8" stroke-width="0.8"/><path d="M5 32 L17 28.5 M9 34 L21 30 M13 36 L26 32 M17 38 L30 34" stroke="#c4c4c4" stroke-width="0.9"/></svg>
<span class="t" style="left:786px;top:621px;font-size:18px;color:#111">此电脑</span>
<svg style="left:793px;top:661px" width="41" height="41" viewBox="0 0 41 41"><circle cx="26" cy="16" r="14.5" fill="url(#gglobe)"/><path d="M16 6 Q24 9 20 16 Q28 19 34 9 M30 24 Q35 22 38 25" stroke="#bfe4f4" stroke-width="2.5" fill="none"/><path d="M0 15 L27 22 V38 L0 31Z" fill="url(#gmon)" stroke="#2a80c0" stroke-width="0.8"/><path d="M8 38 L22 41" stroke="#c8c8c8" stroke-width="2.5"/></svg>
<span class="t" style="left:795px;top:713px;font-size:18px;color:#111">网络</span>
<div class="a" style="left:887px;top:284px;width:675px;height:399px;background:#fff"></div>
<div class="a" style="left:1344px;top:284px;width:1px;height:399px;background:#f2f2f8"></div>
<span class="t" style="left:895px;top:292px;font-size:18px;color:#222">名称</span>
<svg style="left:1111px;top:284px" width="12" height="7" viewBox="0 0 12 7"><path d="M1 6 L6 1 L11 6" fill="none" stroke="#888" stroke-width="1.3"/></svg>
<span class="t" style="left:1355px;top:292px;font-size:18px;color:#222">修改日期</span>
<svg style="left:901px;top:323px" width="20" height="24" viewBox="0 0 20 24"><path d="M1 2 Q1 1 2 1 H17 Q18 1 18 2 V17 L20 19 V23 H1Z" fill="url(#gfold)" stroke="#e8c050" stroke-width="0.8"/></svg>
<span class="t" style="left:926px;top:326px;font-size:19px;color:#222">cbTest</span>
<span class="t" style="left:1355px;top:326px;font-size:19px;color:#222;letter-spacing:0.3px">2022/9/13 15:44</span>
<div class="a" style="left:887px;top:683px;width:675px;height:23px;background:#f0f0f0"></div>
<div class="a" style="left:912px;top:684px;width:405px;height:21px;background:#cdcdcd"></div>
<svg style="left:894px;top:689px" width="8" height="11" viewBox="0 0 8 11"><path d="M7 1 L2 5.5 L7 10" fill="none" stroke="#444" stroke-width="2.6"/></svg>
<svg style="left:1546px;top:689px" width="8" height="11" viewBox="0 0 8 11"><path d="M1 1 L6 5.5 L1 10" fill="none" stroke="#444" stroke-width="2.6"/></svg>
<span class="t" style="left:889px;top:729px;font-size:18px;color:#111">文件名</span>
<span class="t" style="left:944px;top:730px;font-size:15px;color:#111;-webkit-text-stroke-width:0.1px;font-family:'Liberation Mono',monospace;">(N):</span>
<div class="a" style="left:1031px;top:720px;width:369px;height:32px;background:#fff;border:1px solid #7a7a7a"></div>
<span class="t" style="left:1038px;top:728px;font-size:14.8px;color:#111;-webkit-text-stroke-width:0.15px;font-family:'Liberation Mono',monospace;transform:scaleY(1.15);transform-origin:0 0">dev_test.cpp</span>
<svg style="left:1380px;top:733px" width="13" height="8" viewBox="0 0 13 8"><path d="M1 1 L6.5 7 L12 1" fill="none" stroke="#444" stroke-width="1.6"/></svg>
<span class="t" style="left:889px;top:767px;font-size:18px;color:#111">保存类型</span>
<span class="t" style="left:962px;top:768px;font-size:15px;color:#111;-webkit-text-stroke-width:0.1px;font-family:'Liberation Mono',monospace;">(T):</span>
<div class="a" style="left:1031px;top:763px;width:369px;height:29px;background:#e1e1e1;border:1px solid #adadad"></div>
<span class="t" style="left:1036px;top:770px;font-size:14.8px;color:#111;-webkit-text-stroke-width:0.15px;font-family:'Liberation Mono',monospace;transform:scaleY(1.1);transform-origin:0 0">C++ source files (*.cpp;*.cc;*.cxx;*.</span>
<svg style="left:1380px;top:775px" width="13" height="8" viewBox="0 0 13 8"><path d="M1 1 L6.5 7 L12 1" fill="none" stroke="#444" stroke-width="1.6"/></svg>
<div class="a" style="left:1429px;top:722px;width:131px;height:31px;background:#e1e1e1;border:1px solid #adadad"></div>
<span class="t" style="left:1463px;top:728px;font-size:18px;color:#111">保存</span>
<span class="t" style="left:1499px;top:729px;font-size:15px;color:#111;-webkit-text-stroke-width:0.1px;font-family:'Liberation Mono',monospace;">(S)</span>
<div class="a" style="left:1429px;top:763px;width:131px;height:31px;background:#e1e1e1;border:1px solid #adadad"></div>
<span class="t" style="left:1476px;top:768px;font-size:18px;color:#111">取消</span>
<svg style="left:1554px;top:811px" width="14" height="14" viewBox="0 0 14 14"><path d="M11 2h2v2h-2zM7 6h2v2H7zM11 6h2v2h-2zM3 10h2v2H3zM7 10h2v2H7zM11 10h2v2h-2z" fill="#bbb"/></svg>
<div class="a" style="left:1558px;top:965px;width:138px;height:48px;filter:drop-shadow(0 0 2px rgba(0,0,0,.35))"><svg style="left:0;top:0" width="138" height="48" viewBox="0 0 138 48"><path d="M30 13 A15 15 0 1 0 31 31" fill="none" stroke="#fafafa" stroke-width="5"/><circle cx="20" cy="22" r="9" fill="#d8d8e8" opacity=".7"/><path d="M10 27 Q22 12 36 9 Q26 18 16 32Z" fill="#f0b020"/><text x="44" y="29" font-size="20" font-weight="bold" fill="#fafafa" font-family="Liberation Sans">创新互联</text><path d="M44 35 H128" stroke="#f4f4f4" stroke-width="2" stroke-dasharray="3 1"/></svg></div></body></html>
